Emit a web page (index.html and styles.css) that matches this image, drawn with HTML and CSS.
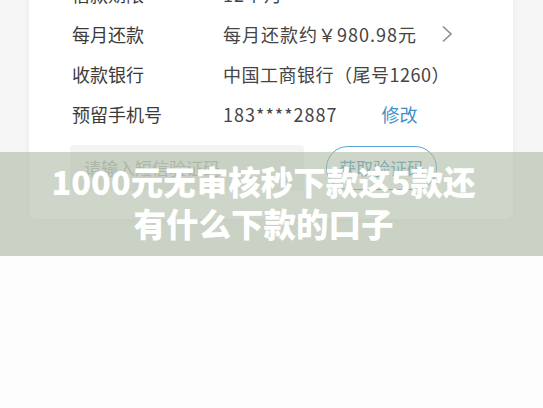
FILE: index.html
```html
<!DOCTYPE html>
<html lang="zh">
<head>
<meta charset="utf-8">
<link rel="stylesheet" href="styles.css">
</head>
<body>
<div class="shot">
  <div class="card">
    <div class="row"><span class="label">借款期限</span><span class="value">12个月</span></div>
    <div class="row"><span class="label">每月还款</span><span class="value">每月还款约￥980.98元</span>
      <svg class="chev" width="12" height="18" viewBox="0 0 12 18"><polyline points="2,1.5 10,9 2,16.5" fill="none" stroke="#8e8e8e" stroke-width="1.6"/></svg>
    </div>
    <div class="row"><span class="label">收款银行</span><span class="value value-tight">中国工商银行（尾号1260）</span></div>
    <div class="row"><span class="label">预留手机号</span><span class="value">183****2887</span><span class="edit">修改</span></div>
    <div class="code">
      <div class="input">请输入短信验证码</div>
      <div class="btn">获取验证码</div>
    </div>
  </div>
  <div class="banner">
    <h1>1000元无审核秒下款这5款还<br>有什么下款的口子</h1>
  </div>
</div>
</body>
</html>
```
FILE: styles.css
```css
html, body { margin: 0; padding: 0; }
body {
  background: #fdfdfd;
  font-family: "Noto Sans CJK SC", "Noto Sans", sans-serif;
  width: 543px;
  height: 408px;
  overflow: hidden;
}
.shot {
  position: relative;
  height: 256px;
  overflow: hidden;
  background: #f6f6f6;
}
.card {
  margin: -26px 0 0 29px;
  width: 484px;
  background: #ffffff;
  border-radius: 0 0 8px 8px;
  box-shadow: 0 1px 6px rgba(0,0,0,0.05);
  padding: 0 0 28px 0;
  box-sizing: border-box;
}
.row {
  display: flex;
  align-items: center;
  height: 40px;
  padding-left: 43px;
  font-size: 18px;
}
.label {
  width: 151px;
  color: #3b3b3b;
}
.value {
  color: #454545;
  letter-spacing: 1px;
}
.value-tight { letter-spacing: 0.5px; }
.chev { margin-left: 24px; }
.edit {
  margin-left: 44px;
  color: #3f8fc7;
}
.code {
  display: flex;
  align-items: center;
  margin-top: 11px;
  padding-left: 41px;
}
.input {
  width: 234px;
  height: 46px;
  box-sizing: border-box;
  background: #f4f4f4;
  border-radius: 4px;
  padding-left: 14px;
  font-size: 17px;
  line-height: 46px;
  color: #b3b3b3;
}
.btn {
  margin-left: 22px;
  width: 111px;
  height: 44px;
  box-sizing: border-box;
  border: 1.5px solid #5aa6d6;
  border-radius: 22px;
  color: #4d9acb;
  font-size: 17px;
  text-align: center;
  line-height: 41px;
}
.banner {
  position: absolute;
  left: 0;
  right: 0;
  top: 152px;
  height: 104px;
  padding-right: 16px;
  background: rgba(168, 184, 160, 0.58);
  display: flex;
  align-items: center;
  justify-content: center;
}
.banner h1 {
  margin: -4px 0 0 0;
  color: #ffffff;
  font-size: 32.5px;
  font-weight: 900;
  line-height: 42px;
  text-align: center;
}
```
